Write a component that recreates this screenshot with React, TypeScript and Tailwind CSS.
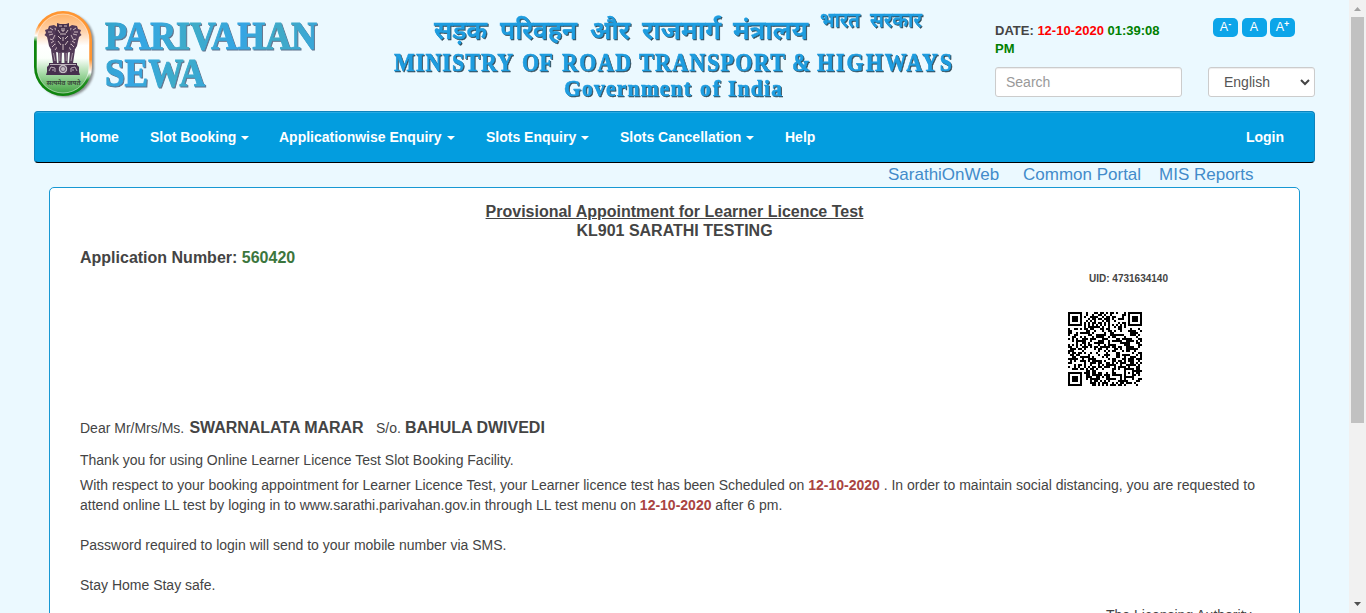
import React from "react";

const FINDERS = [
  [0, 0],
  [30, 0],
  [0, 30],
];

function qrModule(x: number, y: number): boolean {
  for (const [fx, fy] of FINDERS) {
    const dx = x - fx;
    const dy = y - fy;
    if (dx >= -1 && dx <= 7 && dy >= -1 && dy <= 7) {
      const ring = Math.max(Math.abs(dx - 3), Math.abs(dy - 3));
      return ring === 3 || ring <= 1;
    }
  }
  const ring = Math.max(Math.abs(x - 30), Math.abs(y - 30));
  if (ring <= 2) return ring !== 1;
  if (x === 6) return y % 2 === 0;
  if (y === 6) return x % 2 === 0;
  let h = (x * 374761393 + y * 668265263) | 0;
  h = Math.imul(h ^ (h >>> 13), 1274126177);
  h ^= h >>> 16;
  return (h & 255) < 128;
}

function QrCode() {
  let d = "";
  for (let y = 0; y < 37; y++) {
    for (let x = 0; x < 37; x++) {
      if (qrModule(x, y)) d += `M${x} ${y}h1v1h-1z`;
    }
  }
  return (
    <svg className="block h-[74px] w-[74px]" viewBox="0 0 37 37" shapeRendering="crispEdges">
      <path d={d} fill="#000" />
    </svg>
  );
}

function SideLion({ flip }: { flip?: boolean }) {
  return (
    <g transform={flip ? "scale(-1 1)" : undefined}>
      <path d="M-4 18L-9 15L-14 16L-15 19L-18 20L-17 23L-18.500 25L-16 27L-15 31L-14 36L-11 41L-3 43Z" fill="#523a58" />
      <path
        d="M-13 18l3 2M-15 22h4M-14 25l4-1M-8 18l1 4M-8 25l-2 4M-13 29l3 1M-12 33l3-2M-11 37l4-4M-7 31l-1 4M-8 40l3-4"
        stroke="#d8c4c8"
        strokeWidth="0.9"
        fill="none"
      />
      <path d="M-12 40L-10 53H-6L-7 41ZM-5 40L-4.500 53H-1.500L-1 40Z" fill="#523a58" />
      <path d="M-9.500 43l1.500 8M-3.200 43v8" stroke="#c9b9c3" strokeWidth="0.7" />
    </g>
  );
}

function Emblem() {
  return (
    <svg className="block h-[94px] w-[66px] shrink-0" viewBox="0 0 66 94">
      <defs>
        <linearGradient id="rimRight" x1="0" y1="0" x2="0" y2="1">
          <stop offset="0" stopColor="#ff9632" />
          <stop offset="0.57" stopColor="#ff9632" />
          <stop offset="0.72" stopColor="#fff" />
          <stop offset="0.82" stopColor="#229022" />
          <stop offset="1" stopColor="#0e850e" />
        </linearGradient>
        <linearGradient id="rimLeft" x1="0" y1="0" x2="0" y2="1">
          <stop offset="0" stopColor="#ff9632" />
          <stop offset="0.17" stopColor="#ff9632" />
          <stop offset="0.29" stopColor="#fff" />
          <stop offset="0.36" stopColor="#0e850e" />
          <stop offset="1" stopColor="#0e850e" />
        </linearGradient>
        <linearGradient id="field" x1="0" y1="0" x2="0" y2="1">
          <stop offset="0" stopColor="#ffb266" />
          <stop offset="0.22" stopColor="#ffd2ab" />
          <stop offset="0.4" stopColor="#fff" />
          <stop offset="0.56" stopColor="#fbfffb" />
          <stop offset="0.78" stopColor="#9bd59b" />
          <stop offset="1" stopColor="#44a344" />
        </linearGradient>
        <filter id="soft" x="-20%" y="-20%" width="150%" height="140%">
          <feGaussianBlur stdDeviation="1.3" />
        </filter>
        <clipPath id="leftHalf"><rect width="29" height="94" /></clipPath>
        <clipPath id="rightHalf"><rect x="29" width="37" height="94" /></clipPath>
      </defs>
      <rect x="3" y="3" width="57" height="84" rx="28.5" fill="#555" opacity="0.65" filter="url(#soft)" />
      <rect x="0" y="1" width="58" height="85" rx="29" fill="url(#rimLeft)" clipPath="url(#leftHalf)" />
      <rect x="0" y="1" width="58" height="85" rx="29" fill="url(#rimRight)" clipPath="url(#rightHalf)" />
      <rect x="3" y="4" width="52" height="79" rx="26" fill="url(#field)" stroke="#fff" strokeOpacity="0.5" />
      <g transform="translate(29 0)">
        <SideLion />
        <SideLion flip />
        <path d="M-6 13L-3 14H3L6 13V17L8 21L7 27L8 33L5 40L0 43L-5 40L-8 33L-7 27L-8 21L-6 17Z" fill="#46304d" />
        <path
          d="M-4 16h3M1 16h3M-1 18v3h2v-3M-5 20l2 3M5 20l-2 3M-3 24h6M-5 26l3 3M5 26l-3 3M0 27v4M-5 31l3 4M5 31l-3 4M0 34v6"
          stroke="#e2d0d0"
          strokeWidth="0.9"
          fill="none"
        />
        <path d="M-14 53H14V55L16 57V62L17 65H-17L-16 62V57L-14 55Z" fill="#46304d" />
        <circle cx="0" cy="59" r="4.800" fill="#c2bcc2" stroke="#3e2945" />
        <circle cx="0" cy="59" r="2.500" fill="none" stroke="#6b5770" strokeWidth="1" />
        <path d="M-14 61l2-4 4 1v4M-11 60h2M14 61l-2-4-4 1v4M11 60h-2M-13 54.500h26" stroke="#c5bac3" strokeWidth="0.9" fill="none" />
      </g>
      <text
        x="29.500"
        y="75"
        textAnchor="middle"
        textLength="34"
        lengthAdjust="spacingAndGlyphs"
        fontSize="7"
        fontWeight="700"
        fill="#3a4a3a"
        className="font-['Noto_Sans_Devanagari','Noto_Sans',sans-serif]"
      >
        सत्यमेव जयते
      </text>
    </svg>
  );
}

type Word = { t: string; x: number; w: number };

const HINDI_TITLE: Word[] = [
  { t: "सड़क", x: 44, w: 53 },
  { t: "परिवहन", x: 110, w: 77 },
  { t: "और", x: 200, w: 40 },
  { t: "राजमार्ग", x: 252, w: 79 },
  { t: "मंत्रालय", x: 343, w: 75 },
];

const HINDI_GOV: Word[] = [
  { t: "भारत", x: 430, w: 40 },
  { t: "सरकार", x: 480, w: 52 },
];

const MINISTRY: Word[] = [
  { t: "MINISTRY", x: 4, w: 119 },
  { t: "OF", x: 132, w: 31 },
  { t: "ROAD", x: 172, w: 69 },
  { t: "TRANSPORT", x: 249, w: 146 },
  { t: "&", x: 402, w: 18 },
  { t: "HIGHWAYS", x: 427, w: 135 },
];

const GOVERNMENT: Word[] = [
  { t: "Government", x: 174, w: 127 },
  { t: "of", x: 310, w: 20 },
  { t: "India", x: 338, w: 54 },
];

function HindiWords({ words, y, size }: { words: Word[]; y: number; size: number }) {
  return (
    <g className="font-['Noto_Sans_Devanagari','Noto_Sans',sans-serif] font-semibold">
      {words.map((w) => (
        <text key={w.t} x={w.x} y={y} fontSize={size} textLength={w.w} lengthAdjust="spacingAndGlyphs">
          {w.t}
        </text>
      ))}
    </g>
  );
}

function SerifWords({ words, y, size, condense }: { words: Word[]; y: number; size: number; condense: number }) {
  return (
    <g className="font-['Liberation_Serif',serif] font-bold" strokeWidth="0.6">
      {words.map((w) => (
        <text
          key={w.t}
          transform={`translate(${w.x} ${y}) scale(${condense} 1)`}
          fontSize={size}
          textLength={w.w / condense}
          lengthAdjust="spacing"
        >
          {w.t}
        </text>
      ))}
    </g>
  );
}

const NAV = [
  { label: "Home", width: "w-[70px]" },
  { label: "Slot Booking", width: "w-[129px]", menu: true },
  { label: "Applicationwise Enquiry", width: "w-[207px]", menu: true },
  { label: "Slots Enquiry", width: "w-[134px]", menu: true },
  { label: "Slots Cancellation", width: "w-[165px]", menu: true },
  { label: "Help", width: "w-[60px]" },
];

function Header() {
  return (
    <header className="flex h-[111px] pl-[34px]">
      <div className="flex w-[356px] pt-[10px]">
        <Emblem />
        <svg className="-mt-[10px] h-[110px] w-[230px] drop-shadow-[1px_1px_0.5px_#61738c]" viewBox="0 0 230 110">
          <defs>
            <linearGradient id="word" gradientUnits="userSpaceOnUse" x1="0" y1="20" x2="220" y2="90">
              <stop offset="0" stopColor="#35a5c5" />
              <stop offset="0.2" stopColor="#35a6e4" />
              <stop offset="0.4" stopColor="#3eacc8" />
              <stop offset="0.6" stopColor="#34a5e5" />
              <stop offset="0.75" stopColor="#40aac6" />
              <stop offset="1" stopColor="#35a5e2" />
            </linearGradient>
          </defs>
          <g className="font-['Liberation_Serif',serif] font-bold" fill="url(#word)" stroke="url(#word)" strokeWidth="1">
            <text x="5" y="48.500" fontSize="41" textLength="212" lengthAdjust="spacingAndGlyphs">PARIVAHAN</text>
            <text x="5" y="86" fontSize="40" textLength="100" lengthAdjust="spacingAndGlyphs">SEWA</text>
          </g>
        </svg>
      </div>
      <svg
        className="h-[110px] w-[580px] shrink-0 drop-shadow-[1px_1px_0.5px_#344c59]"
        viewBox="0 0 580 110"
        fill="#1e9de0"
        stroke="#1e9de0"
        strokeWidth="0.4"
      >
        <HindiWords words={HINDI_TITLE} y={38.5} size={26} />
        <HindiWords words={HINDI_GOV} y={27} size={21} />
        <SerifWords words={MINISTRY} y={70.5} size={25.5} condense={0.86} />
        <SerifWords words={GOVERNMENT} y={96} size={24} condense={0.9} />
      </svg>
      <div className="ml-[25px] w-[187px] pt-[22px]">
        <p className="h-[45px] text-[13px] leading-[18px] font-bold whitespace-nowrap">
          DATE: <span className="text-[#f00]">12-10-2020</span>{" "}
          <span className="text-[#008000]">
            01:39:08
            <br />
            PM
          </span>
        </p>
        <input
          className="block h-[30px] w-[187px] rounded-[3px] border border-[#ccc] bg-white px-[10px] text-[14px] shadow-[inset_0_1px_1px_rgba(0,0,0,0.075)] placeholder:text-[#999]"
          placeholder="Search"
        />
      </div>
      <div className="ml-[26px] w-[107px] pt-[18px]">
        <div className="flex h-[49px] gap-[3.5px] pl-[5px]">
          {["-", "", "+"].map((s, i) => (
            <button
              key={i}
              className="flex h-[19px] w-[25px] items-center justify-center rounded-[5px] bg-[#0ca5e9] text-[12.5px] leading-none text-white"
            >
              A{s && <sup className="top-[-3px] text-[9px] leading-none font-bold">{s}</sup>}
            </button>
          ))}
        </div>
        <button className="flex h-[30px] w-[107px] items-center justify-between rounded-[3px] border border-[#ccc] bg-white pr-[4px] pl-[15px] text-[14px] text-[#555] shadow-[inset_0_1px_1px_rgba(0,0,0,0.075)]">
          English
          <svg className="h-[8px] w-[10px]" viewBox="0 0 10 8">
            <path d="M1 2l4 4 4-4" fill="none" stroke="#444" strokeWidth="2" />
          </svg>
        </button>
      </div>
    </header>
  );
}

function Scrollbar() {
  return (
    <div className="flex h-[613px] w-[17px] shrink-0 flex-col items-center bg-[#f1f1f1]">
      <svg className="h-[17px] w-[17px]" viewBox="0 0 17 17"><path d="M5 11h7L8.500 7z" fill="#a3a3a3" /></svg>
      <div className="h-[406px] w-[13px] bg-[#c1c1c1]" />
      <div className="grow" />
      <svg className="h-[17px] w-[17px]" viewBox="0 0 17 17"><path d="M5 6h7L8.500 10z" fill="#505050" /></svg>
    </div>
  );
}

export default function App() {
  return (
    <div className="flex h-[613px] w-[1366px] overflow-hidden bg-[#ebf9ff] font-['Liberation_Sans',Arial,sans-serif] text-[14px] leading-[20px] text-[#444]">
      <div className="w-[1349px] shrink-0">
        <Header />
        <nav className="ml-[34px] flex h-[52px] w-[1281px] items-center rounded-[4px] border border-[#0d83bd] border-b-black bg-[#039ddf] pr-[30px] pl-[45px] font-bold text-white shadow-[inset_0_1px_0_rgba(255,255,255,0.15)]">
          {NAV.map((n) => (
            <a key={n.label} className={`flex shrink-0 items-center whitespace-nowrap ${n.width}`}>
              {n.label}
              {n.menu && <span className="mt-[2px] ml-[5px] border-x-4 border-t-4 border-x-transparent border-t-white" />}
            </a>
          ))}
          <a className="ml-auto">Login</a>
        </nav>
        <div className="flex h-[24px] pl-[888px] text-[17px] leading-[23px] text-[#428bca]">
          <a className="w-[135px]">SarathiOnWeb</a>
          <a className="w-[136px]">Common Portal</a>
          <a>MIS Reports</a>
        </div>
        <main className="ml-[49px] h-[600px] w-[1251px] rounded-[5px] border border-[#1798d3] bg-white px-[30px] pt-[14px]">
          <h1 className="text-center text-[16px] leading-[19px] font-bold">
            <span className="underline">Provisional Appointment for Learner Licence Test</span>
            <br />
            KL901 SARATHI TESTING
          </h1>
          <p className="mt-[8px] text-[16px] leading-[20px] font-bold">
            Application Number: <span className="text-[#3c763d]">560420</span>
          </p>
          <div className="ml-[988px] h-[150px] pt-[3px]">
            <p className="pl-[21px] text-[10px] leading-[16px] font-bold">UID: 4731634140</p>
            <div className="mt-[25px]"><QrCode /></div>
          </div>
          <p className="flex h-[20px] items-baseline whitespace-pre">
            <span className="w-[109.5px]">Dear Mr/Mrs/Ms.</span>
            <b className="w-[186.5px] text-[16px] tracking-[-0.05px]">SWARNALATA MARAR</b>
            <span className="w-[29px]">S/o.</span>
            <b className="text-[16px]">BAHULA DWIVEDI</b>
          </p>
          <p className="mt-[12px]">Thank you for using Online Learner Licence Test Slot Booking Facility.</p>
          <p className="mt-[5px] whitespace-nowrap">
            With respect to your booking appointment for Learner Licence Test, your Learner licence test has been Scheduled on{" "}
            <b className="text-[#a94442]">12-10-2020</b> . In order to maintain social distancing, you are requested to
            <br />
            attend online LL test by loging in to www.sarathi.parivahan.gov.in through LL test menu on{" "}
            <b className="text-[#a94442]">12-10-2020</b> after 6 pm.
          </p>
          <p className="mt-[20px]">Password required to login will send to your mobile number via SMS.</p>
          <p className="mt-[20px]">Stay Home Stay safe.</p>
          <p className="mt-[10px] ml-[1026px] whitespace-nowrap">The Licensing Authority</p>
        </main>
      </div>
      <Scrollbar />
    </div>
  );
}
